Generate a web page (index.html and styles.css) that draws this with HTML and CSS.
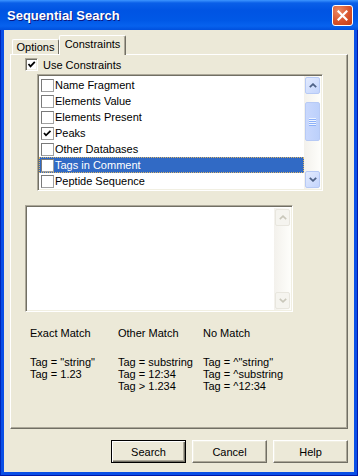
FILE: index.html
```html
<!DOCTYPE html>
<html lang="en">
<head>
    <meta charset="UTF-8">
    <meta name="viewport" content="width=device-width, initial-scale=1.0">
    <link rel="stylesheet" href="styles.css">
</head>
<body>
    <div class="window">
        <div class="titlebar">
            <span class="title">Sequential Search</span>
            <span class="close">
                <svg width="11" height="11" viewBox="0 0 11 11"><path d="M1.5 1.5 L9.5 9.5 M9.5 1.5 L1.5 9.5" stroke="#fff" stroke-width="2.2" stroke-linecap="square"/></svg>
            </span>
        </div>
        <div class="client">
            <div class="tabs">
                <div class="tab tab-options">Options</div>
                <div class="tab tab-constraints active">Constraints</div>
            </div>
            <div class="panel">
                <div class="use-row">
                    <span class="check check-3d"><svg width="9" height="9" viewBox="0 0 9 9"><path d="M1.5 4 L3.5 6.3 L7.8 1.8" fill="none" stroke="#000" stroke-width="1.8"/></svg></span>
                    <span>Use Constraints</span>
                </div>

                <div class="listbox">
                    <ul class="items">
                        <li><span class="check"></span>Name Fragment</li>
                        <li><span class="check"></span>Elements Value</li>
                        <li><span class="check"></span>Elements Present</li>
                        <li><span class="check"><svg width="9" height="9" viewBox="0 0 9 9"><path d="M1 4 L3 6.3 L7.5 1.8" fill="none" stroke="#000" stroke-width="1.8"/></svg></span>Peaks</li>
                        <li><span class="check"></span>Other Databases</li>
                        <li class="selected"><span class="check"></span>Tags in Comment</li>
                        <li><span class="check"></span>Peptide Sequence</li>
                    </ul>
                    <div class="scrollbar">
                        <div class="sb-btn"><svg width="8" height="5" viewBox="0 0 8 5"><path d="M0.8 4.2 L4 1.2 L7.2 4.2" fill="none" stroke="#4d6185" stroke-width="1.8"/></svg></div>
                        <div class="sb-gap"></div>
                        <div class="sb-thumb"><span class="grip"></span></div>
                        <div class="sb-track"></div>
                        <div class="sb-btn"><svg width="8" height="5" viewBox="0 0 8 5"><path d="M0.8 0.8 L4 3.8 L7.2 0.8" fill="none" stroke="#4d6185" stroke-width="1.8"/></svg></div>
                    </div>
                </div>

                <div class="textbox">
                    <div class="textbox-body"></div>
                    <div class="scrollbar disabled">
                        <div class="sb-btn"><svg width="8" height="5" viewBox="0 0 8 5"><path d="M0.8 4.2 L4 1.2 L7.2 4.2" fill="none" stroke="#c9c7ba" stroke-width="1.6"/></svg></div>
                        <div class="sb-track"></div>
                        <div class="sb-btn"><svg width="8" height="5" viewBox="0 0 8 5"><path d="M0.8 0.8 L4 3.8 L7.2 0.8" fill="none" stroke="#c9c7ba" stroke-width="1.6"/></svg></div>
                    </div>
                </div>

                <div class="legend">
                    <div class="legend-col">
                        <div class="legend-head">Exact Match</div>
                        <div>Tag = "string"</div>
                        <div>Tag = 1.23</div>
                    </div>
                    <div class="legend-col">
                        <div class="legend-head">Other Match</div>
                        <div>Tag = substring</div>
                        <div>Tag = 12:34</div>
                        <div>Tag &gt; 1.234</div>
                    </div>
                    <div class="legend-col">
                        <div class="legend-head">No Match</div>
                        <div>Tag = ^"string"</div>
                        <div>Tag = ^substring</div>
                        <div>Tag = ^12:34</div>
                    </div>
                </div>
            </div>

            <div class="buttons">
                <button class="btn btn-default">Search</button>
                <button class="btn">Cancel</button>
                <button class="btn">Help</button>
            </div>
        </div>
    </div>
</body>
</html>
```

FILE: styles.css
```css
* {
    margin: 0;
    padding: 0;
    box-sizing: border-box;
}
body {
    background: #fff;
    font-family: Tahoma, 'Liberation Sans', sans-serif;
    font-size: 11px;
    color: #000;
}
.window {
    width: 358px;
    height: 476px;
    background: #0a4fe6;
    border-bottom: 1px solid #0019a8;
    border-left: 1px solid #0027b8;
    border-right: 1px solid #0019a8;
    display: flex;
    flex-direction: column;
}

/* Title bar */
.titlebar {
    height: 30px;
    margin: 0 -1px;
    padding: 0 5px 0 7px;
    display: flex;
    align-items: center;
    justify-content: space-between;
    background: linear-gradient(#3d95ff 0, #0a5fe8 3px, #0054e3 10px, #0058e6 20px, #0762ee 26px, #0050dd 30px);
}
.title {
    color: #fff;
    font-family: 'Liberation Sans', sans-serif;
    font-weight: bold;
    font-size: 13px;
    text-shadow: 1px 1px #0a1883;
}
.close {
    width: 21px;
    height: 21px;
    border: 1px solid #fff;
    border-radius: 3px;
    background: radial-gradient(circle at 30% 25%, #ec8a64, #d8532c 55%, #c23c15);
    display: flex;
    align-items: center;
    justify-content: center;
}

/* Client area */
.client {
    flex: 1;
    margin: 0 3px 3px;
    background: #ece9d8;
    padding-top: 5px;
}
.tabs {
    display: flex;
    align-items: flex-end;
    height: 19px;
    padding-left: 8px;
}
.tab {
    height: 15px;
    line-height: 14px;
    text-align: center;
    white-space: nowrap;
    border: 1px solid #fff;
    border-bottom: none;
    border-right-color: #716f64;
    border-radius: 2px 2px 0 0;
    background: #ece9d8;
}
.tab-options {
    width: 47px;
}
.tab-constraints {
    width: 67px;
}
.tab.active {
    height: 20px;
    margin-bottom: -1px;
    line-height: 17px;
    position: relative;
    z-index: 1;
    box-shadow: inset -1px 0 #aca899;
}
.panel {
    width: 338px;
    height: 375px;
    margin-left: 6px;
    border: 1px solid;
    border-color: #fff #716f64 #716f64 #fff;
    box-shadow: inset -1px -1px #aca899;
}

/* Checkboxes */
.check {
    width: 13px;
    height: 13px;
    flex: none;
    background: #fff;
    border: 1px solid;
    border-color: #7a7a7a #a0a0a0 #a0a0a0 #7a7a7a;
    display: flex;
    align-items: center;
    justify-content: center;
}
.check-3d {
    border-color: #aca899 #fff #fff #aca899;
    box-shadow: inset 1px 1px #716f64, inset -1px -1px #f1efe2;
}
.use-row {
    display: flex;
    align-items: center;
    gap: 5px;
    height: 13px;
    margin: 3px 0 0 14px;
}

/* List box */
.listbox {
    width: 286px;
    height: 117px;
    margin: 3px 0 0 26px;
    background: #fff;
    border: 1px solid;
    border-color: #aca899 #fff #fff #aca899;
    box-shadow: inset 1px 1px #716f64, inset -1px -1px #f1efe2;
    padding: 1px;
    display: flex;
}
.items {
    list-style: none;
    flex: 1;
    padding-top: 1px;
}
.items li {
    height: 16px;
    display: flex;
    align-items: center;
    gap: 1px;
    padding-left: 2px;
    white-space: nowrap;
}
.items li.selected {
    background: #316ac5;
    color: #fff;
    outline: 1px dotted #d9b56a;
    outline-offset: -1px;
}

/* Scroll bars */
.scrollbar {
    width: 17px;
    display: flex;
    flex-direction: column;
    background: linear-gradient(90deg, #f3f1ec, #fefefb);
}
.sb-btn {
    height: 17px;
    flex: none;
    margin: 1px;
    border: 1px solid #b7caf5;
    border-radius: 2px;
    background: linear-gradient(135deg, #e3ebfe, #c4d5fc);
    display: flex;
    align-items: center;
    justify-content: center;
}
.sb-gap {
    height: 7px;
}
.sb-thumb {
    height: 39px;
    margin: 0 1px;
    border: 1px solid #b7caf5;
    border-radius: 2px;
    background: linear-gradient(90deg, #c9d8fd, #bcd0fb);
    display: flex;
    align-items: center;
    justify-content: center;
}
.grip {
    width: 7px;
    height: 8px;
    background: repeating-linear-gradient(#eef4fe 0 1px, #8cb0f8 1px 2px);
}
.sb-track {
    flex: 1;
}
.scrollbar.disabled .sb-btn {
    border-color: #e8e6de;
    background: #f5f4ef;
}

/* Text box */
.textbox {
    width: 268px;
    height: 107px;
    margin: 14px 0 0 14px;
    background: #fff;
    border: 1px solid;
    border-color: #aca899 #fff #fff #aca899;
    box-shadow: inset 1px 1px #716f64, inset -1px -1px #f1efe2;
    padding: 2px 1px 1px 2px;
    display: flex;
}
.textbox-body {
    flex: 1;
}

/* Legend */
.legend {
    display: grid;
    grid-template-columns: 88px 85px auto;
    margin: 15px 0 0 19px;
    line-height: 12px;
}
.legend-head {
    line-height: 13px;
    margin-bottom: 16px;
}

/* Buttons */
.buttons {
    display: flex;
    justify-content: flex-end;
    gap: 6px;
    padding-right: 6px;
    margin-top: 11px;
}
.btn {
    width: 75px;
    height: 23px;
    font-family: Tahoma, 'Liberation Sans', sans-serif;
    font-size: 11px;
    color: #000;
    background: #ece9d8;
    border: 1px solid;
    border-color: #fff #716f64 #716f64 #fff;
    box-shadow: inset -1px -1px #aca899, inset 1px 1px #f1efe2;
}
.btn-default {
    border-color: #000;
    box-shadow: inset 1px 1px #fff, inset -1px -1px #716f64, inset -2px -2px #aca899;
}
```
